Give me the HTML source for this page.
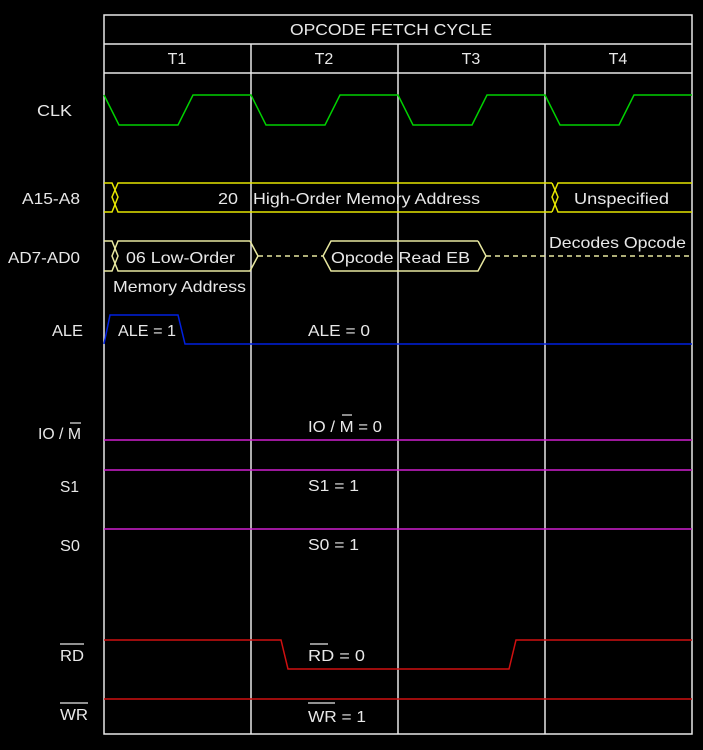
<!DOCTYPE html>
<html><head><style>
html,body{margin:0;padding:0;background:#000;width:703px;height:750px;overflow:hidden}
svg{display:block}
text{font-family:"Liberation Sans",sans-serif;font-size:16px;fill:#e8e8e8}
</style></head><body>
<svg width="703" height="750" viewBox="0 0 703 750">
<g stroke="#e8e8e8" stroke-width="1.5" fill="none">
<rect x="104" y="15" width="588" height="719"/>
<line x1="104" y1="44" x2="692" y2="44"/>
<line x1="104" y1="73" x2="692" y2="73"/>
<line x1="251" y1="44" x2="251" y2="734"/>
<line x1="398" y1="44" x2="398" y2="734"/>
<line x1="545" y1="44" x2="545" y2="734"/>
</g>
<g lengthAdjust="spacingAndGlyphs">
<text x="290" y="35" textLength="202" lengthAdjust="spacingAndGlyphs">OPCODE FETCH CYCLE</text>
<text x="177" y="64" text-anchor="middle">T1</text>
<text x="324" y="64" text-anchor="middle">T2</text>
<text x="471" y="64" text-anchor="middle">T3</text>
<text x="618" y="64" text-anchor="middle">T4</text>
<text x="37" y="116" textLength="35" lengthAdjust="spacingAndGlyphs">CLK</text>
<text x="22" y="204" textLength="58" lengthAdjust="spacingAndGlyphs">A15-A8</text>
<text x="8" y="263" textLength="72" lengthAdjust="spacingAndGlyphs">AD7-AD0</text>
<text x="52" y="336" textLength="31" lengthAdjust="spacingAndGlyphs">ALE</text>
<text x="38" y="439" textLength="43" lengthAdjust="spacingAndGlyphs">IO / M</text>
<text x="60" y="492" textLength="19" lengthAdjust="spacingAndGlyphs">S1</text>
<text x="60" y="551" textLength="20" lengthAdjust="spacingAndGlyphs">S0</text>
<text x="60" y="661" textLength="24" lengthAdjust="spacingAndGlyphs">RD</text>
<text x="60" y="720" textLength="28" lengthAdjust="spacingAndGlyphs">WR</text>
</g>
<g stroke="#e8e8e8" stroke-width="1.2">
<line x1="70" y1="423" x2="81" y2="423"/>
<line x1="60" y1="644" x2="84" y2="644"/>
<line x1="60" y1="703" x2="88" y2="703"/>
<line x1="342" y1="415" x2="352" y2="415"/>
<line x1="310" y1="644" x2="328" y2="644"/>
<line x1="308" y1="703" x2="335" y2="703"/>
</g>
<polyline fill="none" stroke="#00d000" stroke-width="1.5" points="104,95 119,125 178,125 193,95 251,95 266,125 325,125 340,95 398,95 413,125 472,125 487,95 545,95 560,125 619,125 634,95 692,95"/>
<g fill="none" stroke="#e6e600" stroke-width="1.5">
<polyline points="104,183 112,183 118,197 112,212 104,212"/>
<polyline points="552,183 118,183 112,197 118,212 552,212"/>
<polyline points="552,183 558,197 552,212"/>
<polyline points="692,183 558,183 552,197 558,212 692,212"/>
</g>
<g fill="none" stroke="#e8e8a0" stroke-width="1.5">
<polyline points="104,241 112,241 118,256 112,271 104,271"/>
<polyline points="250,241 118,241 112,256 118,271 250,271 258,256 250,241"/>
<polyline points="478,241 331,241 323,256 331,271 478,271 486,256 478,241"/>
<line x1="258" y1="256" x2="323" y2="256" stroke-dasharray="5,4"/>
<line x1="486" y1="256" x2="692" y2="256" stroke-dasharray="5,4"/>
</g>
<text x="218" y="204" textLength="20" lengthAdjust="spacingAndGlyphs">20</text>
<text x="253" y="204" textLength="227" lengthAdjust="spacingAndGlyphs">High-Order Memory Address</text>
<text x="574" y="204" textLength="95" lengthAdjust="spacingAndGlyphs">Unspecified</text>
<text x="126" y="263" textLength="109" lengthAdjust="spacingAndGlyphs">06 Low-Order</text>
<text x="113" y="292" textLength="133" lengthAdjust="spacingAndGlyphs">Memory Address</text>
<text x="331" y="263" textLength="139" lengthAdjust="spacingAndGlyphs">Opcode Read EB</text>
<text x="549" y="248" textLength="137" lengthAdjust="spacingAndGlyphs">Decodes Opcode</text>
<polyline fill="none" stroke="#0020e0" stroke-width="1.5" points="104,344 110,315 178,315 185,344 692,344"/>
<text x="118" y="336" textLength="58" lengthAdjust="spacingAndGlyphs">ALE = 1</text>
<text x="308" y="336" textLength="62" lengthAdjust="spacingAndGlyphs">ALE = 0</text>
<g stroke="#d020d0" stroke-width="1.5">
<line x1="104" y1="440" x2="692" y2="440"/>
<line x1="104" y1="470" x2="692" y2="470"/>
<line x1="104" y1="529" x2="692" y2="529"/>
</g>
<text x="308" y="432" textLength="74" lengthAdjust="spacingAndGlyphs">IO / M = 0</text>
<text x="308" y="491" textLength="51" lengthAdjust="spacingAndGlyphs">S1 = 1</text>
<text x="308" y="550" textLength="51" lengthAdjust="spacingAndGlyphs">S0 = 1</text>
<polyline fill="none" stroke="#d01010" stroke-width="1.5" points="104,640 281,640 288,669 509,669 516,640 692,640"/>
<line x1="104" y1="699" x2="692" y2="699" stroke="#d01010" stroke-width="1.5"/>
<text x="308" y="661" textLength="57" lengthAdjust="spacingAndGlyphs">RD = 0</text>
<text x="308" y="722" textLength="58" lengthAdjust="spacingAndGlyphs">WR = 1</text>
</svg>
</body></html>
